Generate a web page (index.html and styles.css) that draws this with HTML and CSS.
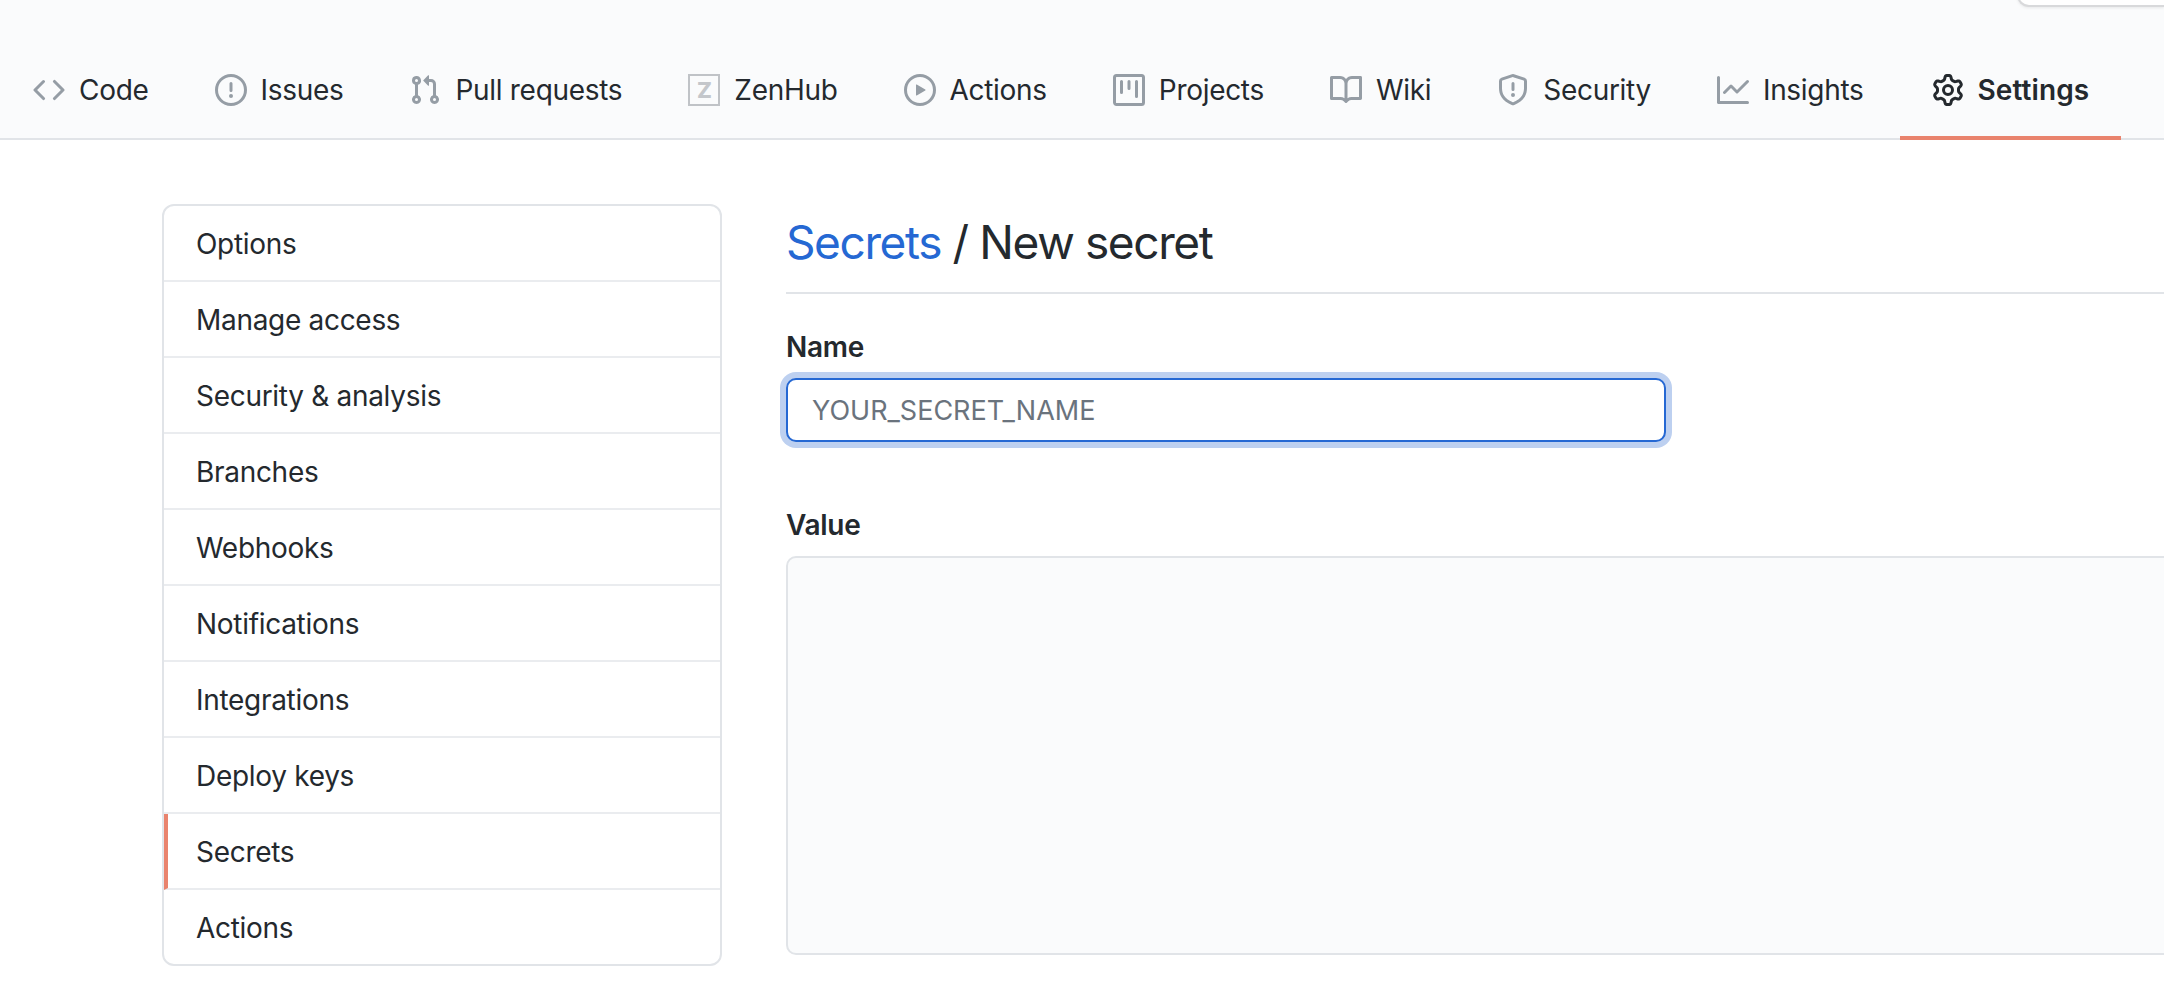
FILE: index.html
```html
<!DOCTYPE html>
<html lang="en">
<head>
<meta charset="utf-8">
<title>New secret</title>
<link rel="stylesheet" href="styles.css">
</head>
<body>
<div class="corner-box"></div>
<nav class="tabs">
  <a class="tab"><svg class="icon" viewBox="0 0 16 16"><path fill-rule="evenodd" d="M4.72 3.22a.75.75 0 011.06 1.06L2.06 8l3.72 3.72a.75.75 0 11-1.06 1.06L.47 8.53a.75.75 0 010-1.06l4.25-4.25zm6.56 0a.75.75 0 10-1.06 1.06L13.94 8l-3.72 3.72a.75.75 0 101.06 1.06l4.25-4.25a.75.75 0 000-1.06l-4.25-4.25z"/></svg>Code</a>
  <a class="tab"><svg class="icon" viewBox="0 0 16 16"><path fill-rule="evenodd" d="M8 1.5a6.5 6.5 0 100 13 6.5 6.5 0 000-13zM0 8a8 8 0 1116 0A8 8 0 010 8zm9 3a1 1 0 11-2 0 1 1 0 012 0zm-.25-6.25a.75.75 0 00-1.5 0v3.5a.75.75 0 001.5 0v-3.5z"/></svg>Issues</a>
  <a class="tab"><svg class="icon" viewBox="0 0 16 16"><path fill-rule="evenodd" d="M7.177 3.073L9.573.677A.25.25 0 0110 .854v4.792a.25.25 0 01-.427.177L7.177 3.427a.25.25 0 010-.354zM3.75 2.5a.75.75 0 100 1.5.75.75 0 000-1.5zm-2.25.75a2.25 2.25 0 113 2.122v5.256a2.251 2.251 0 11-1.5 0V5.372A2.25 2.25 0 011.5 3.25zM11 2.5h-1V4h1a1 1 0 011 1v5.628a2.251 2.251 0 101.5 0V5A2.5 2.5 0 0011 2.5zm1 10.25a.75.75 0 111.5 0 .75.75 0 01-1.5 0zM3.75 12a.75.75 0 100 1.5.75.75 0 000-1.5z"/></svg>Pull requests</a>
  <a class="tab"><span class="zen-icon">Z</span>ZenHub</a>
  <a class="tab"><svg class="icon" viewBox="0 0 16 16"><path fill-rule="evenodd" d="M1.5 8a6.5 6.5 0 1113 0 6.5 6.5 0 01-13 0zM8 0a8 8 0 100 16A8 8 0 008 0zM6.379 5.227A.25.25 0 006 5.442v5.117a.25.25 0 00.379.214l4.264-2.559a.25.25 0 000-.428L6.379 5.227z"/></svg>Actions</a>
  <a class="tab"><svg class="icon" viewBox="0 0 16 16"><path fill-rule="evenodd" d="M1.75 0A1.75 1.75 0 000 1.75v12.5C0 15.216.784 16 1.75 16h12.5A1.75 1.75 0 0016 14.25V1.75A1.75 1.75 0 0014.25 0H1.75zM1.5 1.75a.25.25 0 01.25-.25h12.5a.25.25 0 01.25.25v12.5a.25.25 0 01-.25.25H1.75a.25.25 0 01-.25-.25V1.75zM11.75 3a.75.75 0 00-.75.75v7.5a.75.75 0 001.5 0v-7.5a.75.75 0 00-.75-.75zm-8.25.75a.75.75 0 011.5 0v5.5a.75.75 0 01-1.5 0v-5.5zM8 3a.75.75 0 00-.75.75v3.5a.75.75 0 001.5 0v-3.5A.75.75 0 008 3z"/></svg>Projects</a>
  <a class="tab"><svg class="icon" viewBox="0 0 16 16"><path fill-rule="evenodd" d="M0 1.75A.75.75 0 01.75 1h4.253c1.227 0 2.317.59 3 1.501A3.744 3.744 0 0111.006 1h4.245a.75.75 0 01.75.75v10.5a.75.75 0 01-.75.75h-4.507a2.25 2.25 0 00-1.591.659l-.622.621a.75.75 0 01-1.06 0l-.622-.621A2.25 2.25 0 005.258 13H.75a.75.75 0 01-.75-.75V1.75zm8.755 3a2.25 2.25 0 012.25-2.25H14.5v9h-3.757c-.71 0-1.4.201-1.992.572l.004-7.322zm-1.504 7.324l.004-5.073-.002-2.253A2.25 2.25 0 005.003 2.5H1.5v9h3.757a3.75 3.75 0 011.994.574z"/></svg>Wiki</a>
  <a class="tab"><svg class="icon" viewBox="0 0 16 16"><path fill-rule="evenodd" d="M7.467.133a1.75 1.75 0 011.066 0l5.25 1.68A1.75 1.75 0 0115 3.48V7c0 1.566-.32 3.182-1.303 4.682-.983 1.498-2.585 2.813-5.032 3.855a1.7 1.7 0 01-1.33 0c-2.447-1.042-4.049-2.357-5.032-3.855C1.32 10.182 1 8.566 1 7V3.48a1.75 1.75 0 011.217-1.667l5.25-1.68zm.61 1.429a.25.25 0 00-.153 0l-5.25 1.68a.25.25 0 00-.174.238V7c0 1.358.275 2.666 1.057 3.86.784 1.194 2.121 2.34 4.366 3.297a.2.2 0 00.154 0c2.245-.956 3.582-2.104 4.366-3.298C13.225 9.666 13.5 8.36 13.5 7V3.48a.25.25 0 00-.174-.237l-5.25-1.68zM9 10.5a1 1 0 11-2 0 1 1 0 012 0zm-.25-5.75a.75.75 0 10-1.5 0v3a.75.75 0 001.5 0v-3z"/></svg>Security</a>
  <a class="tab"><svg class="icon" viewBox="0 0 16 16"><path fill-rule="evenodd" d="M1.5 1.75a.75.75 0 00-1.5 0v12.5c0 .414.336.75.75.75h14.5a.75.75 0 000-1.5H1.5V1.75zm14.28 2.53a.75.75 0 00-1.06-1.06L10 7.94 7.53 5.47a.75.75 0 00-1.06 0L3.22 8.72a.75.75 0 001.06 1.06L7 7.06l2.47 2.47a.75.75 0 001.06 0l5.25-5.25z"/></svg>Insights</a>
  <a class="tab tab-active"><svg class="icon" viewBox="0 0 16 16"><path fill-rule="evenodd" d="M7.429 1.525a6.593 6.593 0 011.142 0c.036.003.108.036.137.146l.289 1.105c.147.56.55.967.997 1.189.174.086.341.183.501.29.417.278.97.423 1.53.27l1.102-.303c.11-.03.175.016.195.046.219.31.41.641.573.989.014.031.022.11-.059.19l-.815.806c-.411.406-.562.957-.53 1.456a4.588 4.588 0 010 .582c-.032.499.119 1.05.53 1.456l.815.806c.08.08.073.159.059.19a6.494 6.494 0 01-.573.99c-.02.029-.086.074-.195.045l-1.103-.303c-.559-.153-1.112-.008-1.529.27-.16.107-.327.204-.5.29-.449.222-.851.628-.998 1.189l-.289 1.105c-.029.11-.101.143-.137.146a6.613 6.613 0 01-1.142 0c-.036-.003-.108-.037-.137-.146l-.289-1.105c-.147-.56-.55-.967-.997-1.189a4.502 4.502 0 01-.501-.29c-.417-.278-.97-.423-1.53-.27l-1.102.303c-.11.03-.175-.016-.195-.046a6.492 6.492 0 01-.573-.989c-.014-.031-.022-.11.059-.19l.815-.806c.411-.406.562-.957.53-1.456a4.587 4.587 0 010-.582c.032-.499-.119-1.05-.53-1.456l-.815-.806c-.08-.08-.073-.159-.059-.19a6.44 6.44 0 01.573-.99c.02-.029.086-.075.195-.045l1.103.303c.559.153 1.112.008 1.529-.27.16-.107.327-.204.5-.29.449-.222.851-.628.998-1.189l.289-1.105c.029-.11.101-.143.137-.146zM8 0c-.236 0-.47.01-.701.03-.743.065-1.29.615-1.458 1.261l-.29 1.106c-.017.066-.078.158-.211.224a5.994 5.994 0 00-.668.386c-.123.082-.233.09-.3.071L3.27 2.776c-.644-.177-1.392.02-1.82.63a7.977 7.977 0 00-.704 1.217c-.315.675-.111 1.422.363 1.891l.815.806c.05.048.098.147.088.294a6.084 6.084 0 000 .772c.01.147-.038.246-.088.294l-.815.806c-.474.469-.678 1.216-.363 1.891.2.428.436.835.704 1.218.428.609 1.176.806 1.82.63l1.103-.303c.066-.019.176-.011.299.071.213.143.436.272.668.386.133.066.194.158.212.224l.289 1.106c.169.646.715 1.196 1.458 1.26a8.094 8.094 0 001.402 0c.743-.064 1.29-.614 1.458-1.26l.29-1.106c.017-.066.078-.158.211-.224a5.98 5.98 0 00.668-.386c.123-.082.233-.09.3-.071l1.102.302c.644.177 1.392-.02 1.82-.63.268-.382.505-.789.704-1.217.315-.675.111-1.422-.364-1.891l-.814-.806c-.05-.048-.098-.147-.088-.294a6.1 6.1 0 000-.772c-.01-.147.039-.246.088-.294l.814-.806c.475-.469.679-1.216.364-1.891a7.992 7.992 0 00-.704-1.218c-.428-.609-1.176-.806-1.82-.63l-1.103.303c-.066.019-.176.011-.299-.071a5.991 5.991 0 00-.668-.386c-.133-.066-.194-.158-.212-.224L10.16 1.29C9.99.645 9.444.095 8.701.031A8.094 8.094 0 008 0zm1.5 8a1.5 1.5 0 11-3 0 1.5 1.5 0 013 0zM11 8a3 3 0 11-6 0 3 3 0 016 0z"/></svg>Settings</a>
</nav>
<div class="layout">
  <aside class="menu">
    <a class="menu-item">Options</a>
    <a class="menu-item">Manage access</a>
    <a class="menu-item">Security &amp; analysis</a>
    <a class="menu-item">Branches</a>
    <a class="menu-item">Webhooks</a>
    <a class="menu-item">Notifications</a>
    <a class="menu-item">Integrations</a>
    <a class="menu-item">Deploy keys</a>
    <a class="menu-item menu-item-active">Secrets</a>
    <a class="menu-item">Actions</a>
  </aside>
  <main class="content">
    <h1 class="title"><a class="title-link">Secrets</a> / New secret</h1>
    <form class="form">
      <label class="label" for="name">Name</label>
      <input class="name-input" id="name" type="text" placeholder="YOUR_SECRET_NAME">
      <label class="label label-value" for="value">Value</label>
      <textarea class="value-input" id="value"></textarea>
    </form>
  </main>
</div>
</body>
</html>
```
FILE: styles.css
```css
* { box-sizing: border-box; }
html, body { margin: 0; height: 100%; }
body {
  position: relative;
  overflow: hidden;
  background: #fff;
  color: #24292e;
  font-family: Inter, "Liberation Sans", sans-serif;
  font-size: 28px;
  letter-spacing: -0.3px;
}
.corner-box {
  position: absolute;
  top: -20px;
  right: 0;
  width: 147px;
  height: 27px;
  background: #fff;
  border: 2px solid #d8d9db;
  border-right: 0;
  border-radius: 0 0 0 12px;
  box-shadow: 0 1px 3px rgba(0, 0, 0, 0.08);
}
.tabs {
  display: flex;
  height: 140px;
  padding: 40px 0 0 0;
  background: #fafbfc;
  border-bottom: 2px solid #e1e4e8;
}
.tab {
  display: flex;
  align-items: center;
  gap: 14px;
  height: 100px;
  padding: 0 33px;
  white-space: nowrap;
  color: #24292e;
}
.tab-active {
  margin-left: 3px;
  padding: 4px 32px 0;
  font-weight: 600;
  letter-spacing: 0.1px;
  border-bottom: 4px solid #e9836d;
}
.icon {
  width: 32px;
  height: 32px;
  flex: none;
  fill: #959da5;
}
.tab-active .icon { fill: #24292e; }
.zen-icon {
  display: flex;
  align-items: center;
  justify-content: center;
  width: 32px;
  height: 32px;
  flex: none;
  border: 2px solid #c0c3c7;
  color: #c4c7cb;
  font-size: 22px;
  font-weight: 800;
}
.layout {
  display: flex;
  gap: 64px;
  padding: 64px 0 0 162px;
}
.menu {
  display: flex;
  flex-direction: column;
  flex: none;
  width: 560px;
  align-self: flex-start;
  background: #fff;
  border: 2px solid #e1e4e8;
  border-radius: 12px;
  overflow: hidden;
}
.menu-item {
  display: flex;
  align-items: center;
  height: 76px;
  padding: 2px 0 0 32px;
  border-bottom: 2px solid #eaecef;
  color: #24292e;
}
.menu-item:last-child { height: 74px; border-bottom: 0; }
.menu-item-active { border-left: 4px solid #e9836d; padding-left: 28px; }
.content { flex: 1; min-width: 0; margin-right: -40px; }
.title {
  margin: 0;
  height: 90px;
  padding-top: 10px;
  font-size: 46px;
  line-height: 56px;
  font-weight: 400;
  letter-spacing: -1.4px;
  border-bottom: 2px solid #e1e4e8;
}
.title-link { color: #2568d3; }
.form { display: flex; flex-direction: column; align-items: flex-start; }
.label {
  margin-top: 35px;
  line-height: 36px;
  font-weight: 600;
}
.name-input {
  width: 880px;
  height: 64px;
  margin-top: 13px;
  padding: 0 24px;
  background: #fff;
  border: 2px solid #2568d3;
  border-radius: 10px;
  box-shadow: 0 0 0 6px #bdd0f0;
  outline: 0;
  font-family: inherit;
  font-size: 27px;
  letter-spacing: 0;
  color: #24292e;
}
.name-input::placeholder { color: #6a737d; opacity: 1; }
.label-value { margin-top: 65px; }
.value-input {
  display: block;
  width: 100%;
  height: 399px;
  margin-top: 13px;
  background: #fafbfc;
  border: 2px solid #e1e4e8;
  border-radius: 10px;
  resize: none;
  outline: 0;
}
```
